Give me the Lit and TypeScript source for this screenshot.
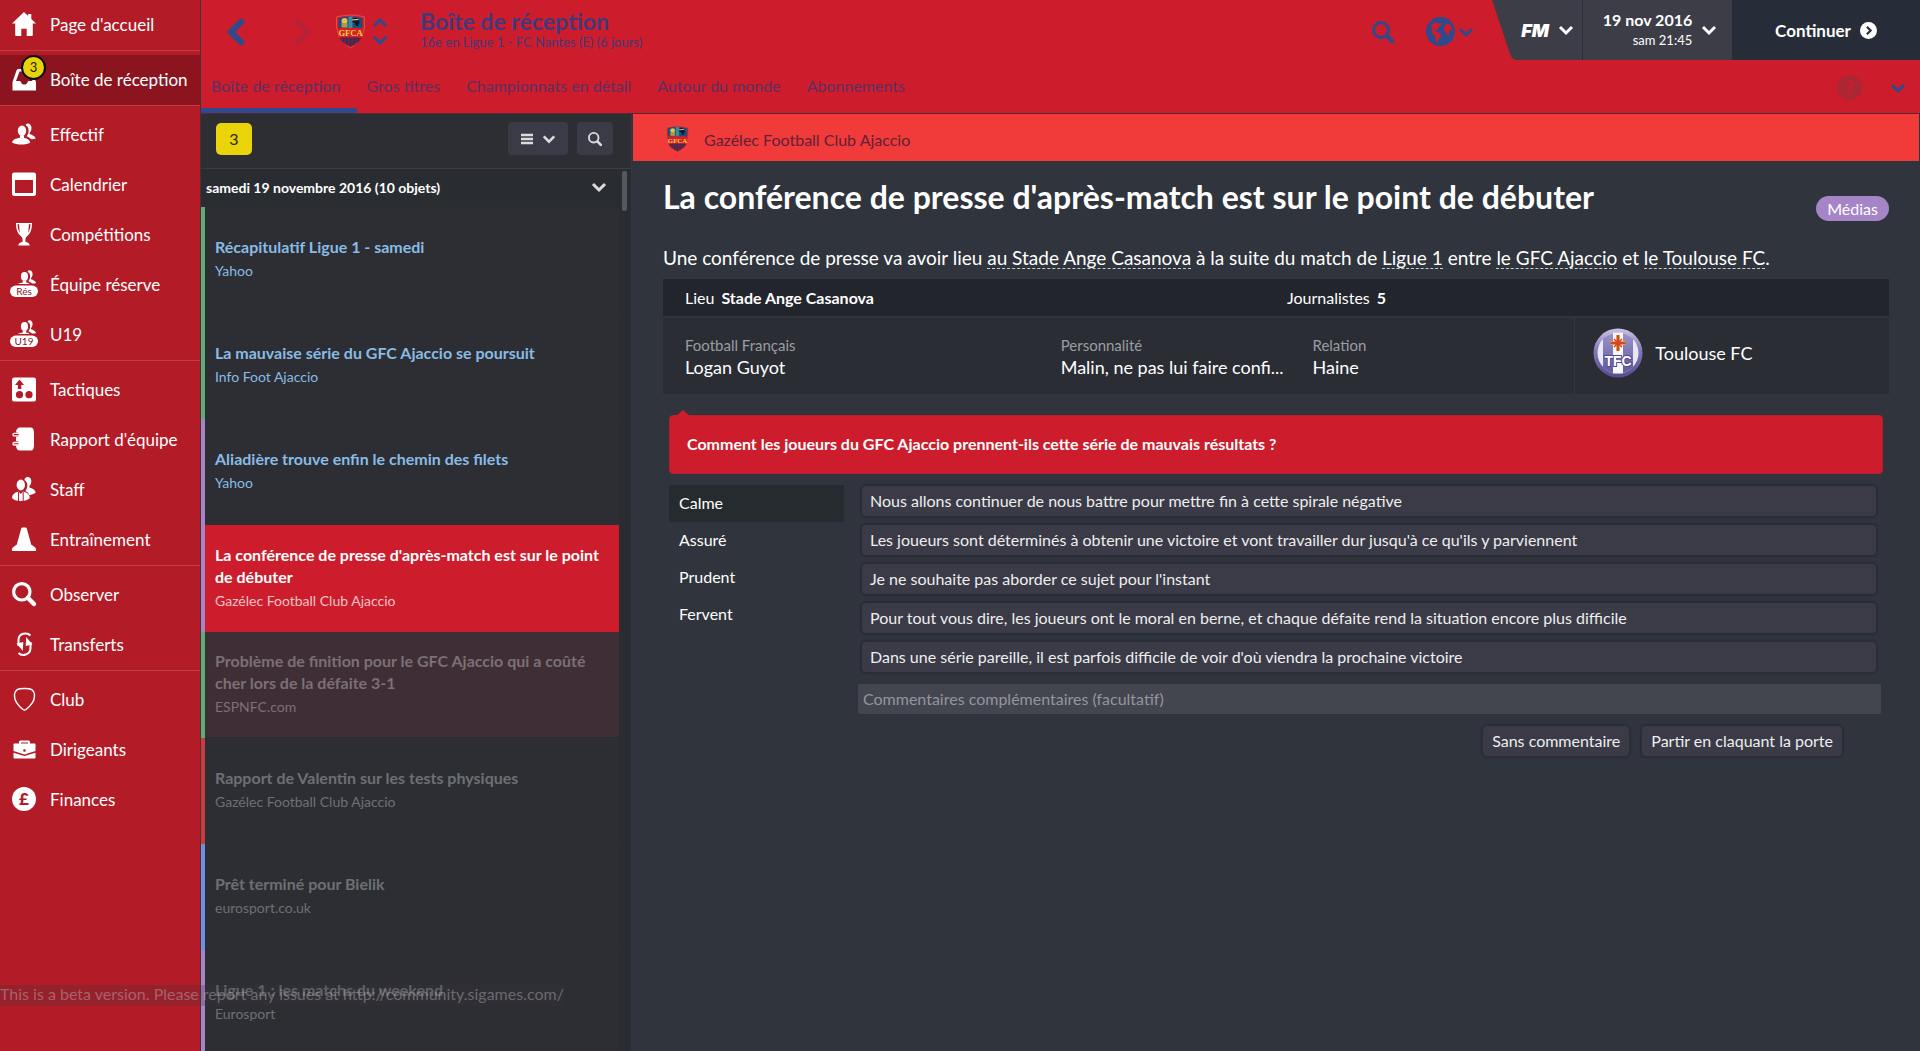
import { LitElement, html, svg, css, TemplateResult } from "lit";
import { customElement, state } from "lit/decorators.js";
import { classMap } from "lit/directives/class-map.js";

/* ---------- icon shapes, drawn on a 24 x 24 grid ---------- */

const people = svg`
  <path d="M15.500 1.500c2.500 0 4 1.900 4 4.500 0 2-.8 3.800-1.900 4.900v1.200c2.600.9 5.400 2 6.100 4.400-1.300.5-3 .7-4.700.6-1-1.300-2.700-2.100-4.500-2.800 1.500-1.700 2.300-3.900 2.100-6.300-.1-2.200-1.200-3.900-3-4.700.5-1.100 1.200-1.800 1.900-1.800z"/>
  <ellipse cx="10" cy="8.700" rx="4.200" ry="5.200"/>
  <path d="M8 13.500h4v2.300c3.600.7 5.800 2.300 6.200 4.700-2 1.500-5.200 2-8.700 2-3.600 0-6.700-.5-9.500-2 .6-2.800 3.700-4 8-4.700z"/>`;

const peopleSmall = (label: string) => svg`
  <g transform="translate(4 -3) scale(.85)">${people}</g>
  <rect x="-3" y="12" width="31" height="13.500" rx="6.700" fill="#b31b27"/>
  <rect x="-2" y="13.500" width="28" height="11.500" rx="5.700"/>
  <text x="12" y="22.700" text-anchor="middle" class="pill-text">${label}</text>`;

const shapes: Record<string, TemplateResult> = {
  home: svg`<path d="M12 0 0 11.500h3.200V23c0 .6.3 1 .9 1h5.200v-7.200h5.400V24h5.200c.6 0 .9-.4.9-1V11.500H24L19.300 7V2h-3.200v2z"/>`,
  inbox: svg`<path fill-rule="evenodd" d="M6 2h12.500L24 15v8.500H.5V15L4.500 3.500Q5 2 6 2zm1.500 2.500L4 14h3.500c.8 0 1.200.4 1.500 1.200.5 1.500 1.500 2.300 3.200 2.300 1.800 0 2.800-.8 3.300-2.300.3-.8.7-1.200 1.500-1.200h3.500L17 4.500z"/>`,
  people,
  calendar: svg`<path fill-rule="evenodd" d="M2 .5h20c1 0 2 1 2 2V22c0 1-1 2-2 2H2c-1 0-2-1-2-2V2.500c0-1 1-2 2-2zM3 8v13h18V8z"/>`,
  cup: svg`<path fill-rule="evenodd" d="M4 1h16c0 5-.8 9.500-4.200 12.500-1.600 1.300-2.300 2.200-2.300 4v2.500c2.300.2 3.800 1.200 4.300 3.500H6.200c.5-2.300 2-3.300 4.300-3.500v-2.500c0-1.800-.7-2.700-2.300-4C4.800 10.500 4 6 4 1zm1.500 1.200c.2 3.300.8 6.300 2.500 8.500C7.300 8 7.200 5 7.200 2.200zm13 0h-1.700c0 2.800-.1 5.800-.8 8.500 1.700-2.200 2.300-5.200 2.500-8.500z"/>`,
  reserve: peopleSmall("Rés"),
  u19: peopleSmall("U19"),
  tactics: svg`<path d="M2 .5h20c1 0 2 1 2 2v20c0 1-1 2-2 2H2c-1 0-2-1-2-2v-20c0-1 1-2 2-2z"/><g fill="#b31b27"><path d="M7.500 2.500 12 8H9.300v4H5.800V8H3z"/><circle cx="7.500" cy="17.700" r="3.600"/><circle cx="17" cy="17.700" r="3.600"/></g>`,
  report: svg`<path d="M8 .5h11c2 0 3 2 3 6v11c0 4-1 6-3 6H8c-2.500 0-4-2-4-5h1.500c2.500 0 2.500-4.200 0-4.200H4V9.800h1.500c2.500 0 2.500-4.200 0-4.200H4c0-3 1.500-5.100 4-5.100z"/><g fill="none" stroke="#fff" stroke-width="1.300"><rect x="1" y="6.400" width="6.500" height="2.500" rx="1.200"/><rect x="1" y="15.500" width="6.500" height="2.500" rx="1.200"/></g>`,
  staff: svg`<path d="M15.500 0c2.500 0 4 2 3.800 4.800-.1 1.700-.9 3.400-1.900 4.500v1.300c3 .9 5.800 2.200 6.300 5-1.500 1.500-4.200 2.300-6.500 2.400-.8-2.200-2-3.200-3.800-4 1.300-1.700 2-3.800 1.900-6-.1-2.300-1.200-4.100-3-5 .6-1.800 1.700-3 3.200-3z"/><ellipse cx="8.800" cy="8" rx="4.200" ry="5.400"/><path d="M6.500 14.500 8.800 17l2.300-2.500c4.500 1 6.700 3.200 6.700 6.500-1.700 2-4.500 3-9 3s-7.300-1-8.800-3c0-3.300 2.200-5.500 6.500-6.500z"/><path d="M6.500 15v9M11.200 15v9" stroke="#b31b27"/>`,
  cone: svg`<path d="M10.300.5h3.400c.5 0 .8.3 1 .8l4.500 16.200 4 3c.5.400.8 1 .8 1.700V24H0v-1.800c0-.7.300-1.300.8-1.700l4-3L9.300 1.300c.2-.5.5-.8 1-.8z"/>`,
  search: svg`<g fill="none" stroke="currentColor"><circle cx="9.800" cy="9.800" r="8.200" stroke-width="3.200"/><path d="m16 16 6 6" stroke-width="4.500" stroke-linecap="round"/></g>`,
  transfer: svg`<g fill="none" stroke="currentColor" stroke-width="2"><path d="M18.500 3.500C15 0 6.500 1 6.500 8v6"/><path d="M6.500 21c3.500 3.500 12 2 12-5v-6"/></g><path d="M4.500 11.500 11.300 10l-.5 9zM20.500 12.500 13.700 14l.5-9z"/>`,
  club: svg`<path d="M12.500 1.500c3 0 6 .3 7.500 1.300 1.300 1 2.500 3.700 2.500 6.200 0 6-6 11.500-8.500 13.500-1 .7-2 .7-3 0C8.500 20.500 2.500 15 2.500 9c0-2.500 1.200-5.200 2.500-6.200 1.500-1 4.500-1.300 7.500-1.300z" fill="none" stroke="currentColor" stroke-width="1.400"/>`,
  brief: svg`<path fill-rule="evenodd" d="M7 6.500V5.200C7 4 7.700 3.500 8.700 3.500h7.600c1 0 1.700.5 1.700 1.700v1.300h4.500c.6 0 1 .4 1 1V14l-11 3.500L1.500 14V7.500c0-.6.4-1 1-1zm2 0h7v-1H9z"/><path d="M1.500 15.700l11 3.300 11-3.300v5c0 .5-.4.800-1 .8h-20c-.6 0-1-.3-1-.8z"/><circle cx="12.500" cy="13.500" r="1.300" fill="#b31b27"/>`,
  pound: svg`<circle cx="12" cy="12" r="12"/><text x="12" y="18" text-anchor="middle" class="pound-text">£</text>`,
  globe: svg`<circle cx="12" cy="12" r="12"/><path fill="#cd1d2c" d="M4.200 6.800 7 4.500l2.500.8L12 4.800l1 1.700-2 1-1 2.500-2.500 1.500 1.500 1 3.500 1.500.3 2-2.300 2-1 3-1.500-1-.5-4-2.500-2.500L5 10.500zM15.500 7.500 18 5l2.200 1.500L21.500 9l-.7 3-1.300-1-.8 1.500.8 2-1.800.8-1.200-2.800-1.800-1 .2-2.500z"/>`,
};

const icon = (name: string) =>
  html`<svg class="icon" viewBox="0 0 24 24" aria-hidden="true">${shapes[name]}</svg>`;

const chevrons: Record<string, string> = {
  down: "M2 5l6 6 6-6",
  up: "M2 11l6-6 6 6",
  left: "M11 2L5 8l6 6",
  right: "M5 2l6 6-6 6",
};

const chevron = (dir: string) =>
  html`<svg class="chev" viewBox="0 0 16 16" aria-hidden="true"><path d=${chevrons[dir]} /></svg>`;

const ajaccioCrest = (cls: string) => html`
  <svg class=${cls} viewBox="0 0 62 70" role="img" aria-label="GFC Ajaccio">
    <path d="M3 6Q31-2 59 6Q64 50 31 68Q-2 50 3 6z" fill="#d3202b" stroke="#f0483c" stroke-width="2"/>
    <path d="M7 8Q31 2 55 8V28H7z" fill="#1a4f7d"/>
    <path d="M27 5h8v23h-8z" fill="#3d8a9c"/>
    <circle cx="19" cy="14" r="6" fill="#d9c25a"/><path d="M13 18h12v9H13z" fill="#b29a45"/>
    <path d="M34 10q9-5 14 1 2 7-1 10 0 4-5 3l-2-6-6-3z" fill="#16161b"/><path d="M34 12l13-1" stroke="#e6e6e6" stroke-width="2"/>
    <path d="M8 47H54Q48 59 31 66Q14 59 8 47z" fill="#7c1c38"/>
    <path d="M17 47v9M24 47v14M31 47v17M38 47v14M45 47v9" stroke="#22356a" stroke-width="3"/>
    <text x="31" y="44" text-anchor="middle" class="crest-text">GFCA</text>
  </svg>`;

const toulouseCrest = html`
  <svg class="tfc" viewBox="0 0 50 50" role="img" aria-label="Toulouse FC">
    <defs>
      <linearGradient id="rim" x1="0" y1="0" x2="0" y2="1"><stop offset="0" stop-color="#c9c3e6"/><stop offset=".45" stop-color="#8379b8"/><stop offset="1" stop-color="#544c8e"/></linearGradient>
      <linearGradient id="inner" x1="0" y1="0" x2="0" y2="1"><stop offset="0" stop-color="#9c94c9"/><stop offset="1" stop-color="#6058a0"/></linearGradient>
    </defs>
    <circle cx="25" cy="25" r="24.500" fill="url(#rim)"/>
    <circle cx="25" cy="25" r="20.500" fill="#e9e7f4"/>
    <path d="M10 10.500Q25-1.500 40 10.500V39.500Q25 51.500 10 39.500z" fill="url(#inner)"/>
    <path d="M20 4.600h10v40.800H20z" fill="#f7f6fb"/>
    <path d="M25 7v16M17.500 15h15" stroke="#e0a637" stroke-width="4"/>
    <path d="M25 7v16M17.500 15h15" stroke="#d8432f" stroke-width="2"/>
    <path d="M21 11l8 8M29 11l-8 8" stroke="#d8432f" stroke-width="1.500"/>
    <text x="25" y="38" text-anchor="middle" class="tfc-text">TFC</text>
  </svg>`;

/* ---------- data ---------- */

interface NavItem { label: string; icon: string; count?: number; active?: boolean }
const navGroups: NavItem[][] = [
  [{ label: "Page d'accueil", icon: "home" }],
  [{ label: "Boîte de réception", icon: "inbox", count: 3, active: true }],
  [
    { label: "Effectif", icon: "people" },
    { label: "Calendrier", icon: "calendar" },
    { label: "Compétitions", icon: "cup" },
    { label: "Équipe réserve", icon: "reserve" },
    { label: "U19", icon: "u19" },
  ],
  [
    { label: "Tactiques", icon: "tactics" },
    { label: "Rapport d'équipe", icon: "report" },
    { label: "Staff", icon: "staff" },
    { label: "Entraînement", icon: "cone" },
  ],
  [
    { label: "Observer", icon: "search" },
    { label: "Transferts", icon: "transfer" },
  ],
  [
    { label: "Club", icon: "club" },
    { label: "Dirigeants", icon: "brief" },
    { label: "Finances", icon: "pound" },
  ],
];

const tabs = ["Boîte de réception", "Gros titres", "Championnats en détail", "Autour du monde", "Abonnements"];

interface Mail { title: string; from: string; kind: string; state: string }
const mails: Mail[] = [
  { title: "Récapitulatif Ligue 1 - samedi", from: "Yahoo", kind: "green", state: "unread" },
  { title: "La mauvaise série du GFC Ajaccio se poursuit", from: "Info Foot Ajaccio", kind: "green", state: "unread" },
  { title: "Aliadière trouve enfin le chemin des filets", from: "Yahoo", kind: "purple", state: "unread" },
  { title: "La conférence de presse d'après-match est sur le point de débuter", from: "Gazélec Football Club Ajaccio", kind: "purple", state: "selected" },
  { title: "Problème de finition pour le GFC Ajaccio qui a coûté cher lors de la défaite 3-1", from: "ESPNFC.com", kind: "green", state: "read tinted" },
  { title: "Rapport de Valentin sur les tests physiques", from: "Gazélec Football Club Ajaccio", kind: "red", state: "read" },
  { title: "Prêt terminé pour Bielik", from: "eurosport.co.uk", kind: "blue", state: "read" },
  { title: "Ligue 1 : les matchs du weekend", from: "Eurosport", kind: "purple", state: "read" },
];

const moods = ["Calme", "Assuré", "Prudent", "Fervent"];
const answers = [
  "Nous allons continuer de nous battre pour mettre fin à cette spirale négative",
  "Les joueurs sont déterminés à obtenir une victoire et vont travailler dur jusqu'à ce qu'ils y parviennent",
  "Je ne souhaite pas aborder ce sujet pour l'instant",
  "Pour tout vous dire, les joueurs ont le moral en berne, et chaque défaite rend la situation encore plus difficile",
  "Dans une série pareille, il est parfois difficile de voir d'où viendra la prochaine victoire",
];

const base = css`
  :host { display: block; min-width: 0; }
  * { box-sizing: border-box; }
  button, input { font: inherit; color: inherit; border: 0; margin: 0; padding: 0; background: none; text-align: left; }
  button { cursor: pointer; }
  a { color: inherit; text-decoration: none; }
  h1, h2, p, dl, dd, dt { margin: 0; font-weight: 400; }
  svg { display: block; flex: none; overflow: visible; }
  .icon { width: 24px; height: 24px; fill: currentColor; }
  .chev { width: 16px; height: 16px; fill: none; stroke: currentColor; stroke-width: 3; }
  .crest-text { font: 700 17px "Liberation Serif", serif; fill: #f5d33c; }
`;

/* ---------- sidebar ---------- */

@customElement("side-nav")
class SideNav extends LitElement {
  static styles = [base, css`
    nav { height: 100%; background: #b31b27; border-right: 1px solid #47303a; color: #fff; }
    .group + .group { border-top: 1px solid #c33b46; padding-top: 4px; }
    .item { display: flex; align-items: center; gap: 14px; height: 50px; padding: 0 0 2px 12px; font-size: 17px; white-space: nowrap; }
    .item.active { background: #8c141f; }
    .glyph { position: relative; }
    .count {
      position: absolute; left: 9px; top: -12px; width: 25px; height: 25px; border-radius: 50%;
      border: 2px solid #0c0a08; background: #e8d20c; color: #1c1a08; font-size: 13px; line-height: 20px; text-align: center;
    }
    .pill-text { font: 400 10px Lato, sans-serif; fill: #8c141f; }
    .pound-text { font: 900 17px Lato, sans-serif; fill: #b31b27; }
  `];
  render() {
    return html`<nav aria-label="Menu">
      ${navGroups.map((group) => html`<div class="group">
        ${group.map((item) => html`
          <a class=${classMap({ item: true, active: !!item.active })} href="#">
            <span class="glyph">${icon(item.icon)}${item.count ? html`<span class="count">${item.count}</span>` : ""}</span>
            <span>${item.label}</span>
          </a>`)}
      </div>`)}
    </nav>`;
  }
}

/* ---------- top bar ---------- */

@customElement("top-bar")
class TopBar extends LitElement {
  static styles = [base, css`
    header { background: #cd1d2c; color: #2c4a8c; border-bottom: 1px solid #5a2833; }
    .row { display: flex; height: 60px; }
    .history, .club, .tools { display: flex; align-items: center; padding-top: 3px; }
    .history { gap: 32px; padding-left: 20px; }
    .history .chev { width: 32px; height: 32px; }
    .forward { color: #b02539; }
    .forward .chev { stroke-width: 2; }
    .club { gap: 6px; padding-left: 18px; }
    .crest { width: 31px; height: 35px; }
    .steps { display: grid; gap: 1px; }
    .steps .chev { stroke-width: 3; }
    .titles { flex: 1; padding: 8px 0 0 32px; color: #43397a; }
    .titles h1 { font-size: 23px; line-height: 27px; font-weight: 700; }
    .titles p { font-size: 13px; line-height: 15px; }
    .tools { gap: 32px; padding-right: 18px; }
    .tools .icon { width: 22px; height: 22px; }
    .world { display: flex; align-items: center; gap: 3px; }
    .tools .world .icon { width: 29px; height: 29px; }
    .panel { display: flex; color: #fff; }
    .panel button { display: flex; align-items: center; justify-content: center; height: 60px; }
    .panel .chev { stroke-width: 3; }
    .fm { width: 90px; gap: 9px; padding-left: 21px; background: #3c3d47; clip-path: polygon(0 0, 100% 0, 100% 100%, 24px 100%, 20px 58px, 18px 54px); }
    .fm-logo { font-family: Inter, Lato, sans-serif; font-size: 18px; font-weight: 900; font-style: italic; }
    .date { width: 150px; gap: 9px; padding-left: 5px; background: #3c3d47; border-left: 1px solid #2b2d38; }
    .when { text-align: right; font-size: 13px; line-height: 20px; }
    .when strong { display: block; font-size: 16px; }
    .go { width: 188px; gap: 9px; background: #272d38; font-size: 17px; font-weight: 700; }
    .go svg { width: 17px; height: 17px; }
    .second { display: flex; align-items: center; justify-content: space-between; height: 53px; }
    .tabs { display: flex; height: 53px; }
    .tab { padding: 14px 16px 0 10px; font-size: 16px; line-height: 24px; color: #5c2f60; border-bottom: 5px solid transparent; white-space: nowrap; }
    .tab.current { border-color: #2c4a8c; }
    .aside { display: flex; align-items: center; gap: 28px; padding: 2px 14px 0 0; }
    .help { width: 25px; height: 25px; border-radius: 50%; background: #ac2633; color: #cd1d2c; font-size: 18px; font-weight: 900; line-height: 25px; text-align: center; }
  `];
  render() {
    return html`<header>
      <div class="row">
        <div class="history">
          <button aria-label="Précédent">${chevron("left")}</button>
          <button class="forward" aria-label="Suivant">${chevron("right")}</button>
        </div>
        <div class="club">
          ${ajaccioCrest("crest")}
          <div class="steps">
            <button aria-label="Club précédent">${chevron("up")}</button>
            <button aria-label="Club suivant">${chevron("down")}</button>
          </div>
        </div>
        <div class="titles">
          <h1>Boîte de réception</h1>
          <p>16e en Ligue 1 - FC Nantes (E) (6 jours)</p>
        </div>
        <div class="tools">
          <button aria-label="Rechercher">${icon("search")}</button>
          <button class="world" aria-label="Monde">${icon("globe")}${chevron("down")}</button>
        </div>
        <div class="panel">
          <button class="fm"><span class="fm-logo">FM</span>${chevron("down")}</button>
          <button class="date"><span class="when"><strong>19 nov 2016</strong>sam 21:45</span>${chevron("down")}</button>
          <button class="go">Continuer
            <svg viewBox="0 0 16 16" aria-hidden="true"><circle cx="8" cy="8" r="8" fill="#fff"/><path d="M6.500 4.500 10 8l-3.500 3.500" fill="none" stroke="#272d38" stroke-width="2"/></svg>
          </button>
        </div>
      </div>
      <div class="second">
        <nav class="tabs" aria-label="Rubriques">
          ${tabs.map((t, i) => html`<a href="#" class=${classMap({ tab: true, current: i === 0 })}>${t}</a>`)}
        </nav>
        <div class="aside">
          <button class="help">?</button>
          <button aria-label="Plus">${chevron("down")}</button>
        </div>
      </div>
    </header>`;
  }
}

/* ---------- message list ---------- */

@customElement("mail-list")
class MailList extends LitElement {
  static styles = [base, css`
    section { height: 100%; display: flex; flex-direction: column; background: #2c2e34; border-right: 1px solid #30373f; color: #fff; }
    .bar { display: flex; align-items: center; gap: 9px; height: 55px; padding: 0 18px 5px 15px; border-bottom: 1px solid #393d44; }
    .unread-count { width: 36px; height: 32px; margin-right: auto; border-radius: 5px; background: #ebd30a; color: #29270f; font-size: 16px; line-height: 31px; text-align: center; }
    .tool { display: flex; align-items: center; justify-content: center; gap: 9px; width: 36px; height: 33px; border-radius: 4px; background: #3a3b46; color: #dcdcdc; }
    .tool.wide { width: 60px; }
    .tool .icon { width: 14px; height: 14px; }
    .tool .chev { width: 14px; height: 14px; }
    .scroller { flex: 1; display: flex; min-height: 0; }
    .items { flex: 1; min-width: 0; overflow: hidden; }
    .day { display: flex; align-items: center; justify-content: space-between; width: 100%; height: 38px; padding: 0 12px 2px 5px; background: #292d31; font-size: 14px; font-weight: 700; }
    .day .chev { color: #dcdcdc; stroke-width: 3; }
    .track { width: 12px; padding: 2px 4px 0 3px; background: #292d31; }
    .thumb { height: 40px; border-radius: 2px; background: #55585c; }
    .mail { display: flex; flex-direction: column; justify-content: center; width: 100%; height: 106px; padding: 0 8px 1px 10px; border-left: 4px solid; box-shadow: inset 0 -1px #292c31; }
    .mail strong { font-size: 16px; line-height: 22px; }
    .mail span { font-size: 14px; line-height: 25px; }
    .green { border-left-color: #5aae76; }
    .purple { border-left-color: #a584c8; }
    .red { border-left-color: #c73c3c; }
    .blue { border-left-color: #6f8fe0; }
    .unread { color: #8abbe4; }
    .selected { height: 107px; background: #cd1d2c; color: #fff; box-shadow: none; }
    .selected span { color: #f3c3c8; }
    .read { color: #6c7074; }
    .tinted { background: #3f2e35; color: #7b7075; }
  `];
  render() {
    return html`<section aria-label="Messages">
      <div class="bar">
        <div class="unread-count">3</div>
        <button class="tool wide" aria-label="Affichage">
          <svg width="12" height="12" viewBox="0 0 12 12" aria-hidden="true"><path d="M0 2h12M0 6h12M0 10h12" stroke="#dcdcdc" stroke-width="2.400"/></svg>
          ${chevron("down")}
        </button>
        <button class="tool" aria-label="Rechercher">${icon("search")}</button>
      </div>
      <div class="scroller">
        <div class="items">
          <button class="day">samedi 19 novembre 2016 (10 objets)${chevron("down")}</button>
          ${mails.map((m) => html`<button class="mail ${m.kind} ${m.state}"><strong>${m.title}</strong><span>${m.from}</span></button>`)}
        </div>
        <div class="track"><div class="thumb"></div></div>
      </div>
    </section>`;
  }
}

/* ---------- opened message ---------- */

@customElement("mail-view")
class MailView extends LitElement {
  @state() private mood = 0;

  static styles = [base, css`
    article { color: #fff; font-size: 16px; }
    .club { display: flex; align-items: center; gap: 14px; height: 47px; padding: 3px 32px 0; margin-right: 1px; background: #f13a3a; color: #5e2238; font-size: 16px; }
    .crest { width: 25px; height: 28px; }
    .body { padding: 16px 31px 16px 30px; }
    .head { display: flex; align-items: flex-start; justify-content: space-between; }
    h2 { font-size: 32px; line-height: 40px; font-weight: 700; }
    .tag { margin-top: 19px; padding: 0 11px; border-radius: 13px; background: #a584c8; line-height: 25px; }
    .intro { margin-top: 25px; font-size: 19px; line-height: 24px; }
    .intro a { border-bottom: 1px dashed #c5cfc5; line-height: 20px; display: inline-block; }
    .facts { display: grid; grid-template-columns: 1fr 1fr; align-items: center; height: 37px; margin-top: 9px; padding: 0 0 1px 22px; background: #22252c; }
    .facts strong { margin-left: 7px; }
    .people { display: grid; grid-template-columns: 376fr 252fr 262fr 315fr; height: 76px; margin-top: 2px; padding-left: 22px; background: #2b2d34; }
    .fact { padding: 16px 16px 0 0; min-width: 0; }
    .fact dt { font-size: 15px; line-height: 22px; color: #9a9da1; }
    .fact dd { font-size: 18px; line-height: 22px; overflow: hidden; text-overflow: ellipsis; white-space: nowrap; }
    .team { display: flex; align-items: center; gap: 12px; padding: 0 0 6px 18px; border-left: 1px solid #34373e; font-size: 18px; }
    .tfc { width: 50px; height: 50px; }
    .tfc-text { font: 700 14px "Liberation Sans", sans-serif; fill: #fff; stroke: #51478f; stroke-width: 2; paint-order: stroke; }
    .question { position: relative; margin: 21px 6px 0; padding: 17px 17px 18px; border: 1px solid #b3202f; border-radius: 4px; background: #cd1d2c; line-height: 22px; font-weight: 700; }
    .question::before { content: ""; position: absolute; left: 6px; top: -6px; border: 7px solid transparent; border-top: 0; border-bottom: 6px solid #cd1d2c; }
    .reply { display: grid; grid-template-columns: 175px 1fr; gap: 14px; margin: 11px 8px 0 6px; }
    .moods { display: flex; flex-direction: column; }
    .mood { height: 37px; padding: 0 10px 2px; }
    .mood.on { background: #262b30; }
    .answers { display: flex; flex-direction: column; gap: 9px; padding: 1px 5px 0 4px; }
    .btn { height: 30px; padding: 0 8px 2px; border-radius: 4px; background: #3a3b46; color: #eee; box-shadow: 0 0 1px 2px #2a2d35; }
    .comment { width: 100%; height: 30px; margin-top: 12px; padding: 0 5px 2px; border-radius: 2px; background: #43454f; }
    .comment::placeholder { color: #94969c; opacity: 1; }
    .end { display: flex; justify-content: flex-end; gap: 13px; margin: 12px 39px 0 0; }
    .end .btn { padding: 0 9px 2px; }
  `];
  render() {
    return html`<article>
      <div class="club">${ajaccioCrest("crest")}<span>Gazélec Football Club Ajaccio</span></div>
      <div class="body">
        <div class="head">
          <h2>La conférence de presse d'après-match est sur le point de débuter</h2>
          <span class="tag">Médias</span>
        </div>
        <p class="intro">Une conférence de presse va avoir lieu <a href="#">au Stade Ange Casanova</a> à la suite du match de <a href="#">Ligue 1</a> entre <a href="#">le GFC Ajaccio</a> et <a href="#">le Toulouse FC</a>.</p>
        <div class="facts">
          <div>Lieu<strong>Stade Ange Casanova</strong></div>
          <div>Journalistes<strong>5</strong></div>
        </div>
        <dl class="people">
          <div class="fact"><dt>Football Français</dt><dd>Logan Guyot</dd></div>
          <div class="fact"><dt>Personnalité</dt><dd>Malin, ne pas lui faire confi...</dd></div>
          <div class="fact"><dt>Relation</dt><dd>Haine</dd></div>
          <div class="team">${toulouseCrest}<span>Toulouse FC</span></div>
        </dl>
        <p class="question">Comment les joueurs du GFC Ajaccio prennent-ils cette série de mauvais résultats ?</p>
        <div class="reply">
          <div class="moods">
            ${moods.map((m, i) => html`<button class=${classMap({ mood: true, on: i === this.mood })} @click=${() => (this.mood = i)}>${m}</button>`)}
          </div>
          <div>
            <div class="answers">${answers.map((a) => html`<button class="btn">${a}</button>`)}</div>
            <input class="comment" type="text" aria-label="Commentaires complémentaires" placeholder="Commentaires complémentaires (facultatif)" />
            <div class="end">
              <button class="btn">Sans commentaire</button>
              <button class="btn">Partir en claquant la porte</button>
            </div>
          </div>
        </div>
      </div>
    </article>`;
  }
}

/* ---------- page ---------- */

@customElement("app-root")
class AppRoot extends LitElement {
  static styles = [base, css`
    :host { position: relative; height: 100vh; overflow: hidden; font-family: Lato, "Open Sans", sans-serif; background: #30343c; }
    .page { display: grid; grid-template-columns: 201px 1fr; grid-template-rows: minmax(0, 1fr); height: 100%; }
    .main { display: flex; flex-direction: column; min-width: 0; }
    .split { flex: 1; display: grid; grid-template-columns: 431px 1fr; grid-template-rows: minmax(0, 1fr); gap: 1px; min-height: 0; }
    .beta { position: absolute; left: 0; bottom: 45px; height: 21px; background: rgba(60, 52, 60, .25); color: rgba(200, 200, 200, .4); font-size: 16px; line-height: 18px; pointer-events: none; }
  `];
  render() {
    return html`
      <div class="page">
        <side-nav></side-nav>
        <div class="main">
          <top-bar></top-bar>
          <div class="split"><mail-list></mail-list><mail-view></mail-view></div>
        </div>
      </div>
      <div class="beta">This is a beta version. Please report any issues at http://community.sigames.com/</div>`;
  }
}
